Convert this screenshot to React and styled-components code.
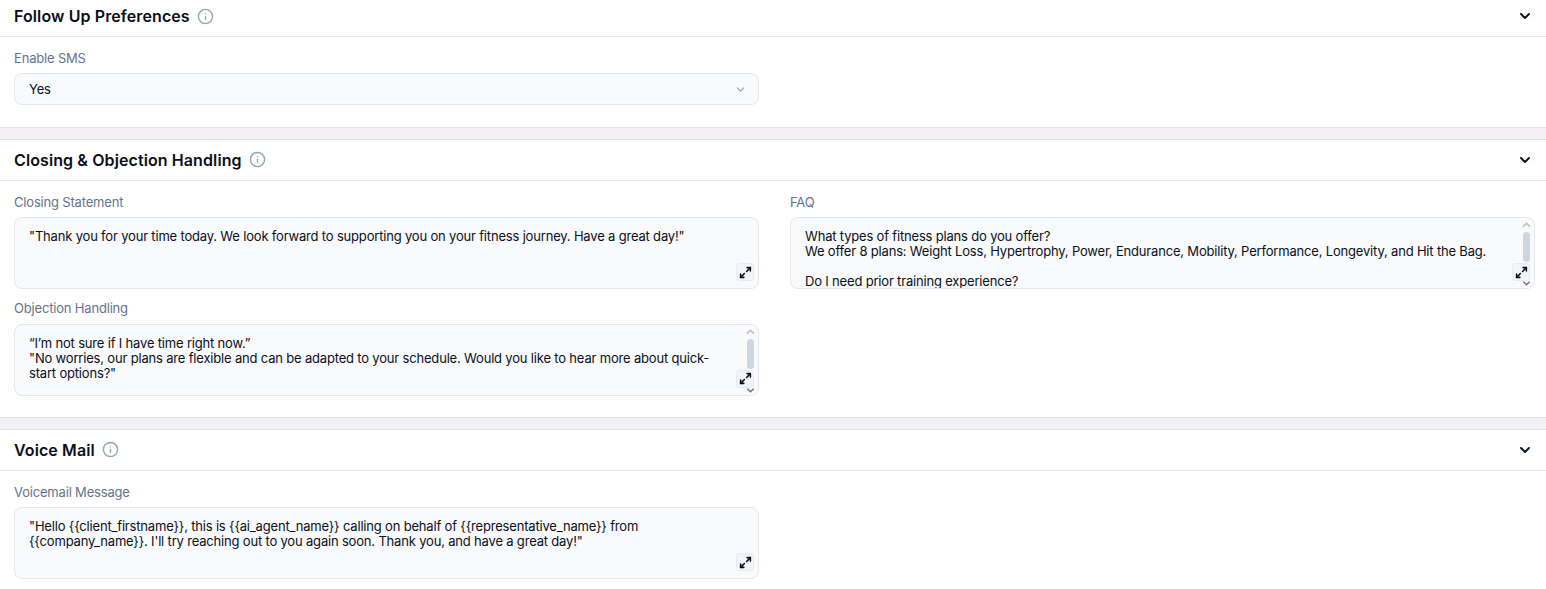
import React from "react";
import styled, { createGlobalStyle } from "styled-components";
import { ChevronDown, Info, Maximize2 } from "lucide-react";

const GlobalStyle = createGlobalStyle`
  html, body {
    margin: 0;
    padding: 0;
    background: #fff;
    overflow: hidden;
  }
  body {
    font-family: "Inter", "Liberation Sans", sans-serif;
    color: #0b0f19;
  }
`;

function Section({ title, cropped, children }) {
  return (
    <Panel>
      <Header $cropped={cropped}>
        <Title>
          {title}
          <Info size={17} color="#94a3b8" strokeWidth={2} />
        </Title>
        <ChevronDown size={16} color="#0f172a" strokeWidth={3} />
      </Header>
      {children}
    </Panel>
  );
}

function TextBox({ label, lines, scroll }) {
  return (
    <Field>
      <Label>{label}</Label>
      <Box>
        <BoxText $inset={scroll}>
          {lines.map((line, i) => (
            <div key={i}>{line || "\u00a0"}</div>
          ))}
        </BoxText>
        {scroll && (
          <Scrollbar>
            <ScrollArrow viewBox="0 0 10 6">
              <path d="M1 5l4-4 4 4" fill="none" stroke="#b4bcc6" strokeWidth="1.6" />
            </ScrollArrow>
            <Thumb />
            <ScrollArrow viewBox="0 0 10 6">
              <path d="M1.5 1.5L5 5l3.5-3.5" fill="none" stroke="#6b7280" strokeWidth="1.6" />
            </ScrollArrow>
          </Scrollbar>
        )}
        <ExpandButton>
          <Maximize2 size={13} color="#0b0f19" strokeWidth={2.8} />
        </ExpandButton>
      </Box>
    </Field>
  );
}

export default function App() {
  return (
    <Page>
      <GlobalStyle />
      <Section title="Follow Up Preferences" cropped>
        <Body $bottom={21.6}>
          <Grid>
            <Field>
              <Label>Enable SMS</Label>
              <Select>
                Yes
                <ChevronDown size={13} color="#9ca3af" strokeWidth={2.5} />
              </Select>
            </Field>
          </Grid>
        </Body>
      </Section>
      <Divider />
      <Section title="Closing & Objection Handling">
        <Body $bottom={21.2}>
          <Grid>
            <Column>
              <TextBox
                label="Closing Statement"
                lines={[
                  '"Thank you for your time today. We look forward to supporting you on your fitness journey. Have a great day!"',
                ]}
              />
              <TextBox
                label="Objection Handling"
                scroll
                lines={[
                  "“I’m not sure if I have time right now.”",
                  '"No worries, our plans are flexible and can be adapted to your schedule. Would you like to hear more about quick-start options?"',
                ]}
              />
            </Column>
            <Column>
              <TextBox
                label="FAQ"
                scroll
                lines={[
                  "What types of fitness plans do you offer?",
                  "We offer 8 plans: Weight Loss, Hypertrophy, Power, Endurance, Mobility, Performance, Longevity, and Hit the Bag.",
                  "",
                  "Do I need prior training experience?",
                ]}
              />
            </Column>
          </Grid>
        </Body>
      </Section>
      <Divider />
      <Section title="Voice Mail">
        <Body $bottom={10}>
          <Grid>
            <TextBox
              label="Voicemail Message"
              lines={[
                '"Hello {{client_firstname}}, this is {{ai_agent_name}} calling on behalf of {{representative_name}} from {{company_name}}. I\'ll try reaching out to you again soon. Thank you, and have a great day!"',
              ]}
            />
          </Grid>
        </Body>
      </Section>
    </Page>
  );
}

const Page = styled.div`
  width: 1546px;
  height: 589px;
  overflow: hidden;
  display: flex;
  flex-direction: column;
`;

const Panel = styled.section`
  background: #fff;
  flex-shrink: 0;
`;

const Header = styled.div`
  height: ${(p) => (p.$cropped ? "32px" : "40px")};
  padding: ${(p) => (p.$cropped ? "0 13px 4px 14px" : "0 13px 0 14px")};
  display: flex;
  align-items: center;
  justify-content: space-between;
  border-bottom: 1px solid #e5e7eb;
`;

const Title = styled.div`
  display: flex;
  align-items: center;
  gap: 7px;
  font-size: 16px;
  font-weight: 600;
  line-height: 20px;
  letter-spacing: 0.1px;
  color: #0b0f19;
`;

const Body = styled.div`
  padding: 13px 11px ${(p) => p.$bottom}px 14px;
`;

const Grid = styled.div`
  display: grid;
  grid-template-columns: 745px 745px;
  column-gap: 31px;
`;

const Column = styled.div`
  display: flex;
  flex-direction: column;
  gap: 11px;
`;

const Field = styled.div`
  display: flex;
  flex-direction: column;
  gap: 7.4px;
`;

const Label = styled.label`
  font-size: 13px;
  line-height: 16px;
  letter-spacing: -0.18px;
  color: #64748b;
`;

const Select = styled.div`
  height: 32px;
  box-sizing: border-box;
  padding: 0 11px 0 14px;
  display: flex;
  align-items: center;
  justify-content: space-between;
  background: #f8fafc;
  border: 1px solid #e5e7eb;
  border-radius: 8px;
  font-size: 13px;
  letter-spacing: -0.18px;
  color: #0b0f19;
`;

const Box = styled.div`
  position: relative;
  height: 72px;
  box-sizing: border-box;
  overflow: hidden;
  background: #f8fafc;
  border: 1px solid #e5e7eb;
  border-radius: 8px;
`;

const BoxText = styled.div`
  padding: 11px ${(p) => (p.$inset ? "42px" : "14px")} 0 14px;
  font-size: 13px;
  line-height: 15px;
  letter-spacing: -0.18px;
  color: #0b0f19;
`;

const Scrollbar = styled.div`
  position: absolute;
  top: 0;
  right: 3px;
  bottom: 0;
  width: 12px;
  background: #fbfbfd;
  display: flex;
  flex-direction: column;
  align-items: center;
  justify-content: space-between;
  padding: 4px 0 2px;
  box-sizing: border-box;
`;

const ScrollArrow = styled.svg`
  width: 9px;
  height: 6px;
  display: block;
  margin-left: 2px;
`;

const Thumb = styled.div`
  width: 7px;
  height: 30px;
  margin: 0 0 14px 3px;
  border-radius: 4px;
  background: #cdd7e2;
`;

const ExpandButton = styled.div`
  position: absolute;
  right: 4px;
  bottom: 7px;
  width: 18px;
  height: 18px;
  box-sizing: border-box;
  display: flex;
  align-items: center;
  justify-content: center;
  background: #f1f4f9;
  border: 1px solid #e8ebf0;
  border-radius: 3px;
`;

const Divider = styled.div`
  height: 11px;
  background: #f3f0f5;
  border-top: 1px solid #e2e2e6;
  border-bottom: 1px solid #e2e2e6;
  flex-shrink: 0;
`;
